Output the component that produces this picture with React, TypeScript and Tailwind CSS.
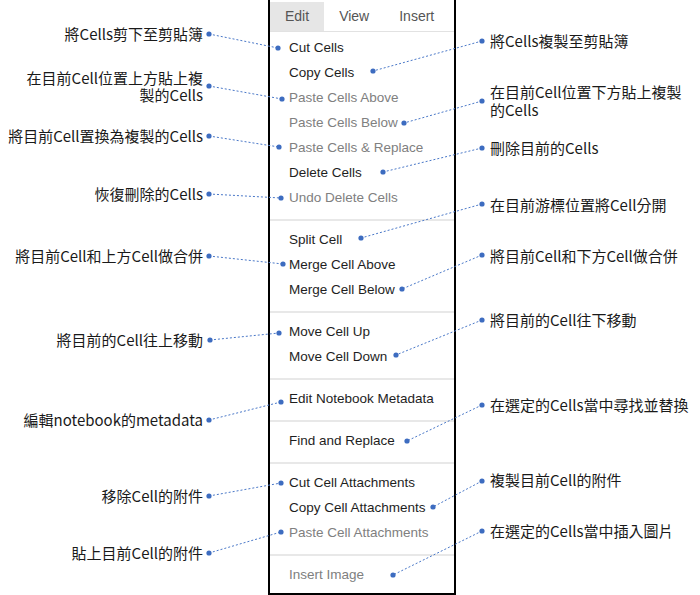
const menuFont = { fontFamily: '"Liberation Sans", Arial, sans-serif' }

type Item = { label: string; off?: boolean } | "sep"

const items: Item[] = [
  { label: "Cut Cells" },
  { label: "Copy Cells" },
  { label: "Paste Cells Above", off: true },
  { label: "Paste Cells Below", off: true },
  { label: "Paste Cells & Replace", off: true },
  { label: "Delete Cells" },
  { label: "Undo Delete Cells", off: true },
  "sep",
  { label: "Split Cell" },
  { label: "Merge Cell Above" },
  { label: "Merge Cell Below" },
  "sep",
  { label: "Move Cell Up" },
  { label: "Move Cell Down" },
  "sep",
  { label: "Edit Notebook Metadata" },
  "sep",
  { label: "Find and Replace" },
  "sep",
  { label: "Cut Cell Attachments" },
  { label: "Copy Cell Attachments" },
  { label: "Paste Cell Attachments", off: true },
  "sep",
  { label: "Insert Image", off: true },
]

// leader lines: [from x, from y, to x, to y]
const leaders: [number, number, number, number][] = [
  [209, 34, 278, 48],
  [209, 86, 282, 99],
  [209, 136, 279, 147],
  [209, 194, 281, 198],
  [209, 256, 283, 264],
  [210, 340, 279, 333],
  [209, 420, 281, 402],
  [209, 496, 281, 483],
  [209, 553, 281, 532],
  [482, 41, 373, 71],
  [482, 101, 404, 123],
  [482, 148, 383, 172],
  [482, 204, 361, 238],
  [482, 255, 402, 289],
  [482, 320, 396, 355],
  [482, 405, 407, 441],
  [482, 481, 433, 507],
  [482, 531, 393, 575],
]

function Menu() {
  return (
    <div className="w-[188px] h-[595px] border-x-2 border-b-2 border-black bg-white pt-[2px] flex flex-col text-[13.5px]" style={menuFont}>
      <div className="flex h-[30px] border-b border-[#e2e2e2] text-[#555] text-[14px]">
        <div className="px-[15px] bg-[#e6e6e6] flex items-center">Edit</div>
        <div className="px-[15px] flex items-center">View</div>
        <div className="px-[15px] flex items-center">Insert</div>
      </div>
      <div className="pt-[4px]">
        {items.map((it, i) =>
          it === "sep" ? (
            <div key={i} className="h-[2px] bg-[#e8e8e8] mt-[8px] mb-[7px]" />
          ) : (
            <div key={i} className={"h-[25px] flex items-center pl-[19px] " + (it.off ? "text-[#808080]" : "text-[#1e1e1e]")}>
              {it.label}
            </div>
          )
        )}
      </div>
    </div>
  )
}

export default function App() {
  const note = "absolute text-[15px] leading-[17px] text-[#1a1a1a] whitespace-nowrap"
  return (
    <div className="relative w-[700px] h-[595px] bg-white overflow-hidden" style={{ fontFamily: '"Noto Sans CJK TC", "Noto Sans", sans-serif' }}>
      <div className="flex">
        <div className="w-[268px]" />
        <Menu />
      </div>

      <svg className="absolute inset-0" width="700" height="595">
        {leaders.map(([x1, y1, x2, y2], i) => (
          <g key={i}>
            <line x1={x1} y1={y1} x2={x2} y2={y2} stroke="#4a78c8" strokeWidth="1" strokeDasharray="2 2" />
            <circle cx={x1} cy={y1} r="2.6" fill="#3d6cc0" />
            <circle cx={x2} cy={y2} r="2.6" fill="#3d6cc0" />
          </g>
        ))}
      </svg>

      <div className="text-right">
        <div className={note + " right-[497px] top-[25px]"}>將Cells剪下至剪貼簿</div>
        <div className={note + " right-[497px] top-[69px] text-right"}>在目前Cell位置上方貼上複<br />製的Cells</div>
        <div className={note + " right-[497px] top-[127px]"}>將目前Cell置換為複製的Cells</div>
        <div className={note + " right-[497px] top-[185px]"}>恢復刪除的Cells</div>
        <div className={note + " right-[497px] top-[247px]"}>將目前Cell和上方Cell做合併</div>
        <div className={note + " right-[497px] top-[331px]"}>將目前的Cell往上移動</div>
        <div className={note + " right-[497px] top-[411px]"}>編輯notebook的metadata</div>
        <div className={note + " right-[497px] top-[487px]"}>移除Cell的附件</div>
        <div className={note + " right-[497px] top-[544px]"}>貼上目前Cell的附件</div>
      </div>

      <div className="text-left">
        <div className={note + " left-[490px] top-[32px]"}>將Cells複製至剪貼簿</div>
        <div className={note + " left-[490px] top-[83px] leading-[18px]"}>在目前Cell位置下方貼上複製<br />的Cells</div>
        <div className={note + " left-[490px] top-[139px]"}>刪除目前的Cells</div>
        <div className={note + " left-[490px] top-[196px]"}>在目前游標位置將Cell分開</div>
        <div className={note + " left-[490px] top-[247px]"}>將目前Cell和下方Cell做合併</div>
        <div className={note + " left-[490px] top-[311px]"}>將目前的Cell往下移動</div>
        <div className={note + " left-[490px] top-[396px]"}>在選定的Cells當中尋找並替換</div>
        <div className={note + " left-[490px] top-[471px]"}>複製目前Cell的附件</div>
        <div className={note + " left-[490px] top-[522px]"}>在選定的Cells當中插入圖片</div>
      </div>
    </div>
  )
}
